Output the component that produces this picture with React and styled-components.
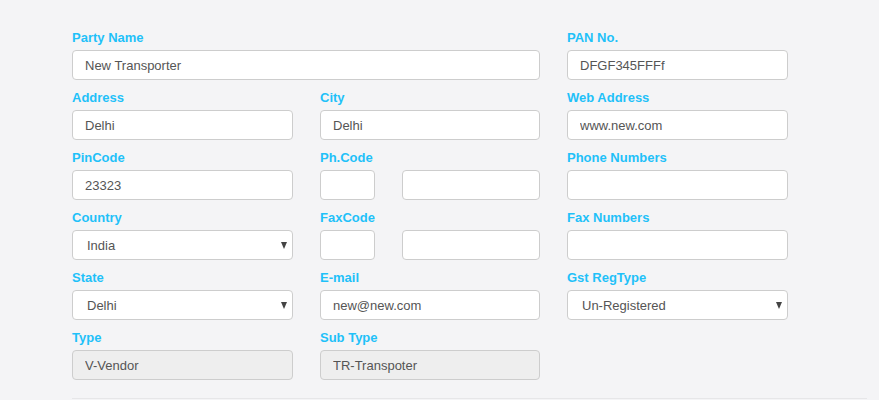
import React from "react"
import styled, { createGlobalStyle } from "styled-components"

const GlobalStyle = createGlobalStyle`
    html, body {
        margin: 0;
        padding: 0;
        background: #f4f4f6;
        font-family: "Liberation Sans", Arial, sans-serif;
    }
`

const PageStyled = styled.div`
    padding: 30px 0 0 72px;
`

const FormGrid = styled.div`
    display: grid;
    grid-template-columns: 221px 220px 221px;
    column-gap: 27px;
    row-gap: 10px;
`

const Field = styled.div`
    display: flex;
    flex-direction: column;
    grid-column: ${(p) => p.span ? `span ${p.span}` : "auto"};
`

const Label = styled.label`
    height: 20px;
    line-height: 15px;
    font-size: 13px;
    font-weight: bold;
    color: #1fc1f9;
`

const Input = styled.input`
    box-sizing: border-box;
    width: 100%;
    height: 30px;
    padding: 0 12px;
    border: 1px solid #cdcdcd;
    border-radius: 4px;
    background: ${(p) => p.disabled ? "#eeeeee" : "#fff"};
    font-family: inherit;
    font-size: 13px;
    color: #555;
    outline: none;
`

const CodePair = styled.div`
    display: grid;
    grid-template-columns: 55px 1fr;
    column-gap: 27px;
`

const SelectWrap = styled.div`
    position: relative;
`

const Select = styled.select`
    box-sizing: border-box;
    width: 100%;
    height: 30px;
    padding: 0 14px;
    border: 1px solid #cdcdcd;
    border-radius: 4px;
    background: #fff;
    font-family: inherit;
    font-size: 13px;
    color: #555;
    appearance: none;
    outline: none;
`

const Caret = styled.span`
    position: absolute;
    right: 6px;
    top: 12px;
    width: 0;
    height: 0;
    border-left: 3.5px solid transparent;
    border-right: 3.5px solid transparent;
    border-top: 7px solid #444;
    pointer-events: none;
`

const Divider = styled.div`
    margin-top: 18px;
    width: 795px;
    height: 1px;
    background: #e6e6e8;
`

function SelectBox({ value }) {
    return (
        <SelectWrap>
            <Select defaultValue={value}>
                <option value={value}>{value}</option>
            </Select>
            <Caret />
        </SelectWrap>
    )
}

export default function App() {
    return (
        <PageStyled>
            <GlobalStyle />
            <FormGrid>
                <Field span={2}>
                    <Label>Party Name</Label>
                    <Input defaultValue="New Transporter" />
                </Field>
                <Field>
                    <Label>PAN No.</Label>
                    <Input defaultValue="DFGF345FFFf" />
                </Field>

                <Field>
                    <Label>Address</Label>
                    <Input defaultValue="Delhi" />
                </Field>
                <Field>
                    <Label>City</Label>
                    <Input defaultValue="Delhi" />
                </Field>
                <Field>
                    <Label>Web Address</Label>
                    <Input defaultValue="www.new.com" />
                </Field>

                <Field>
                    <Label>PinCode</Label>
                    <Input defaultValue="23323" />
                </Field>
                <Field>
                    <Label>Ph.Code</Label>
                    <CodePair>
                        <Input />
                        <Input />
                    </CodePair>
                </Field>
                <Field>
                    <Label>Phone Numbers</Label>
                    <Input />
                </Field>

                <Field>
                    <Label>Country</Label>
                    <SelectBox value="India" />
                </Field>
                <Field>
                    <Label>FaxCode</Label>
                    <CodePair>
                        <Input />
                        <Input />
                    </CodePair>
                </Field>
                <Field>
                    <Label>Fax Numbers</Label>
                    <Input />
                </Field>

                <Field>
                    <Label>State</Label>
                    <SelectBox value="Delhi" />
                </Field>
                <Field>
                    <Label>E-mail</Label>
                    <Input defaultValue="new@new.com" />
                </Field>
                <Field>
                    <Label>Gst RegType</Label>
                    <SelectBox value="Un-Registered" />
                </Field>

                <Field>
                    <Label>Type</Label>
                    <Input disabled defaultValue="V-Vendor" />
                </Field>
                <Field>
                    <Label>Sub Type</Label>
                    <Input disabled defaultValue="TR-Transpoter" />
                </Field>
            </FormGrid>
            <Divider />
        </PageStyled>
    )
}
